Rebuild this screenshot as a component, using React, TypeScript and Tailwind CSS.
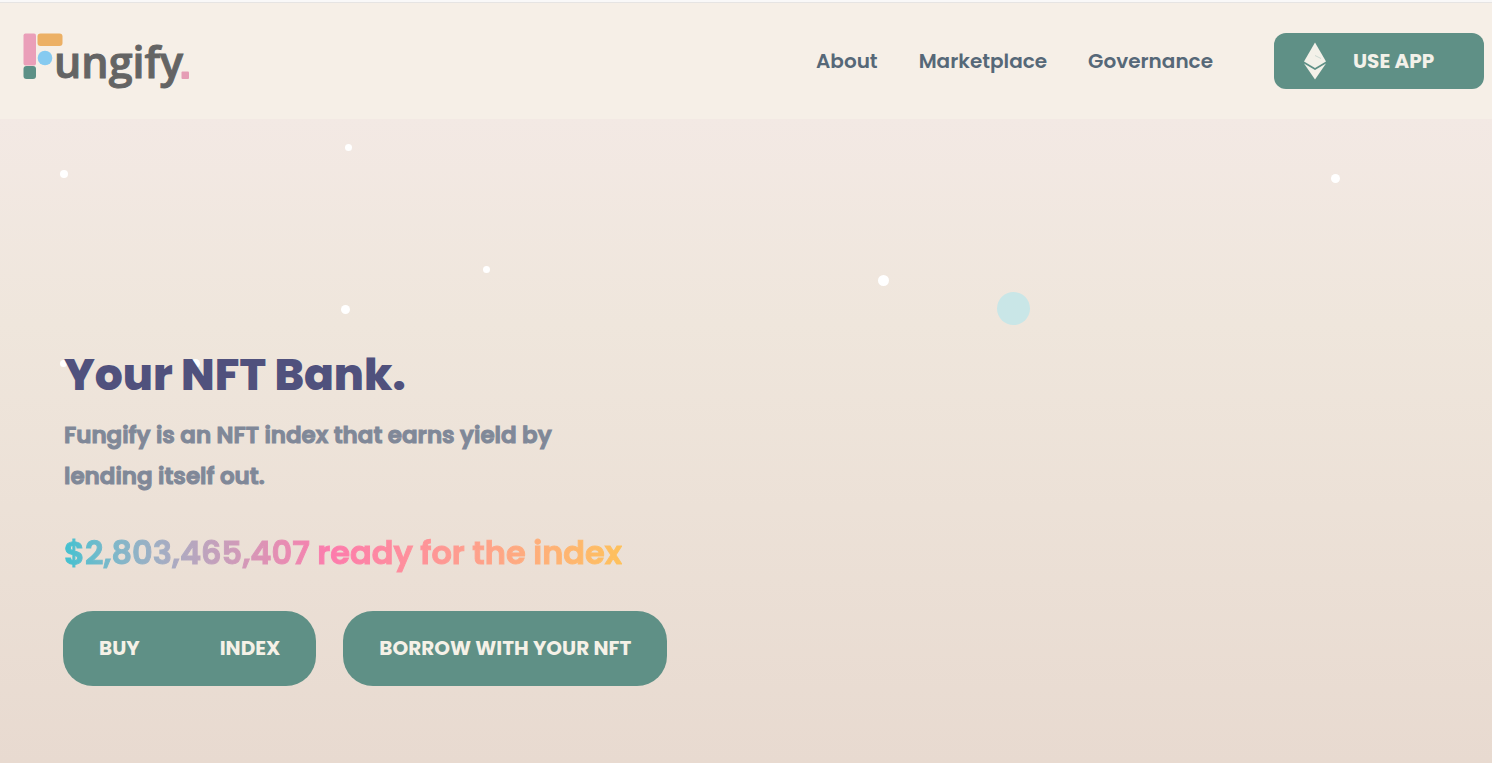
import { clsx } from 'clsx';

interface Particle {
  position: string;
  size: string;
  color?: string;
}

const particles: Particle[] = [
  { position: 'left-[60px] top-[51px]', size: 'size-2' },
  { position: 'left-[345px] top-[25px]', size: 'size-[7px]' },
  { position: 'left-[483px] top-[147px]', size: 'size-[7px]' },
  { position: 'left-[341px] top-[186px]', size: 'size-[9px]' },
  { position: 'left-[878px] top-[156px]', size: 'size-[11px]' },
  { position: 'left-[1331px] top-[55px]', size: 'size-[9px]' },
  { position: 'left-[60px] top-[241px]', size: 'size-[7px]' },
  { position: 'left-[191px] top-[240px]', size: 'size-[9px]' },
  { position: 'left-[997px] top-[173px]', size: 'size-[33px]', color: 'bg-[#c9e6e7]' },
];

const links = ['About', 'Marketplace', 'Governance'];

function Logo() {
  return (
    <a href="#home" aria-label="Fungify">
      <svg width="172" height="64" viewBox="0 0 172 64">
        <rect x="1.5" y="4.5" width="12.5" height="32" rx="2" fill="#ea9fb9" />
        <rect x="15.5" y="4.5" width="25" height="12.5" rx="3" fill="#ecb065" />
        <circle cx="23" cy="29" r="7.3" fill="#86caf0" />
        <rect x="1.5" y="37" width="12.5" height="13" rx="3" fill="#5c9086" />
        <text
          x="32"
          y="49"
          fill="#646464"
          stroke="#646464"
          strokeWidth="1"
          className="font-['Open_Sans',sans-serif] text-[43px] font-semibold"
        >
          ungify
        </text>
        <rect x="159.5" y="42.5" width="7.5" height="7.5" rx="1" fill="#e59db5" />
      </svg>
    </a>
  );
}

function EthereumIcon() {
  return (
    <svg width="24" height="38" viewBox="0 0 24 38" fill="#f3f1e9" aria-hidden="true">
      <path d="M12 0.5 23 19.5 12 26 1 19.5Z" />
      <path d="M1 21.5 12 28 23 21.5 12 37.5Z" />
      <path d="m12 13.5 6 3" stroke="#b9cdc5" strokeWidth="0.7" />
    </svg>
  );
}

function Header() {
  return (
    <header className="border-t-2 border-[#f9f8f8] bg-[#f6efe7]">
      <div className="flex items-center justify-between border-t border-[#e6e4e3] py-[26px] pr-2 pl-[22px]">
        <Logo />
        <div className="flex items-center gap-[61px]">
          <nav className="flex gap-[41px] text-xl leading-8 font-semibold text-[#566878]">
            {links.map((link) => (
              <a key={link} href={`#${link.toLowerCase()}`}>
                {link}
              </a>
            ))}
          </nav>
          <button
            type="button"
            className="flex h-14 w-[210px] items-center gap-[26px] rounded-xl bg-[#5f9086] pl-[29px] text-xl font-bold text-[#f3f1e9]"
          >
            <EthereumIcon />
            USE APP
          </button>
        </div>
      </div>
    </header>
  );
}

function Particles() {
  return (
    <div className="pointer-events-none absolute inset-0 overflow-hidden" aria-hidden="true">
      {particles.map(({ position, size, color }) => (
        <span
          key={position}
          className={clsx('absolute rounded-full', position, size, color ?? 'bg-white')}
        />
      ))}
    </div>
  );
}

function Hero() {
  const buttonClass =
    'flex h-[75px] items-center rounded-[30px] bg-[#5f9086] px-9 pb-0.5 text-xl font-bold text-[#f5f1e7]';

  return (
    <main className="relative grow bg-linear-to-b from-[#f3e9e4] via-[#efe6dc] via-32% to-[#e8dad0] px-16 pt-56 pb-16">
      <Particles />
      <div className="relative">
        <h1 className="text-[44px] leading-16 font-extrabold text-[#50517d]">Your NFT Bank.</h1>
        <p className="mt-2 max-w-[540px] text-[23px] leading-[41px] font-semibold text-[#808898] [-webkit-text-stroke:1px_#808898]">
          Fungify is an NFT index that earns yield by lending itself out.
        </p>
        <p className="mt-8 w-fit bg-linear-to-r from-[#3fc1d0] via-[#fd7bac] via-48% to-[#fec15b] bg-clip-text text-[32px] leading-12 font-semibold text-transparent [-webkit-text-stroke:1px_transparent]">
          $2,803,465,407 ready for the index
        </p>
        <div className="mt-[34px] -ml-px flex flex-wrap gap-[27px]">
          <button type="button" className={clsx(buttonClass, 'gap-20')}>
            <span>BUY</span>
            <span>INDEX</span>
          </button>
          <button type="button" className={buttonClass}>
            BORROW WITH YOUR NFT
          </button>
        </div>
      </div>
    </main>
  );
}

export default function App() {
  return (
    <div className="flex min-h-screen flex-col font-['Poppins','Inter',sans-serif]">
      <Header />
      <Hero />
    </div>
  );
}
